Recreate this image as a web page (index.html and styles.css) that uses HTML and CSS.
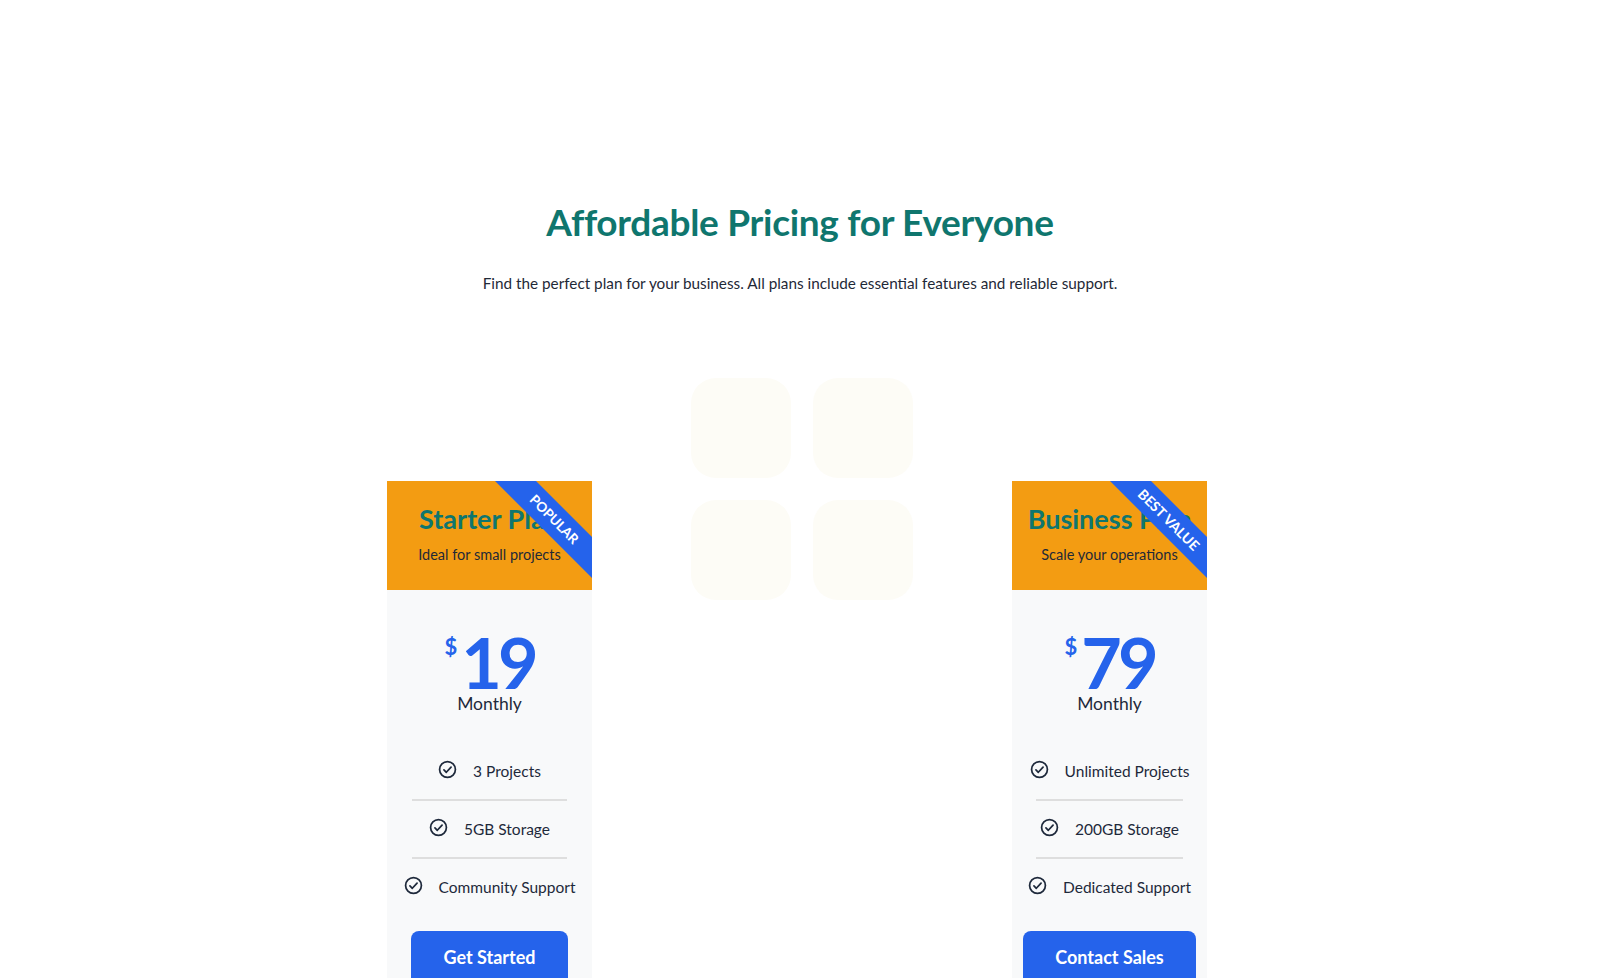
FILE: index.html
```html
<!DOCTYPE html>
<html lang="en">
<head>
<meta charset="utf-8">
<title>Pricing</title>
<link rel="stylesheet" href="styles.css">
</head>
<body>
<section class="pricing">
  <h1 class="pricing-title">Affordable Pricing for Everyone</h1>
  <p class="pricing-lead">Find the perfect plan for your business. All plans include essential features and reliable support.</p>

  <div class="plans">
    <article class="plan plan-starter">
      <header class="plan-head">
        <h2 class="plan-name">Starter Plan</h2>
        <p class="plan-tagline">Ideal for small projects</p>
        <span class="ribbon">Popular</span>
      </header>
      <div class="plan-body">
        <div class="price"><span class="currency">$</span><span class="amount">19</span></div>
        <div class="period">Monthly</div>
        <ul class="features">
          <li class="feature"><svg class="check" viewBox="0 0 24 24"><circle cx="12" cy="12" r="10"/><path d="M7.5 12.5l3 3 6-6.5"/></svg><span>3 Projects</span></li>
          <li class="feature"><svg class="check" viewBox="0 0 24 24"><circle cx="12" cy="12" r="10"/><path d="M7.5 12.5l3 3 6-6.5"/></svg><span>5GB Storage</span></li>
          <li class="feature"><svg class="check" viewBox="0 0 24 24"><circle cx="12" cy="12" r="10"/><path d="M7.5 12.5l3 3 6-6.5"/></svg><span>Community Support</span></li>
        </ul>
        <div class="plan-cta"><a class="btn" href="#">Get Started</a></div>
      </div>
    </article>

    <div class="plan-placeholder">
      <svg class="grid-icon" viewBox="0 0 222 222">
        <rect x="0" y="0" width="100" height="100" rx="25"/>
        <rect x="122" y="0" width="100" height="100" rx="25"/>
        <rect x="0" y="122" width="100" height="100" rx="25"/>
        <rect x="122" y="122" width="100" height="100" rx="25"/>
      </svg>
    </div>

    <article class="plan plan-business">
      <header class="plan-head">
        <h2 class="plan-name">Business Plan</h2>
        <p class="plan-tagline">Scale your operations</p>
        <span class="ribbon">Best Value</span>
      </header>
      <div class="plan-body">
        <div class="price"><span class="currency">$</span><span class="amount">79</span></div>
        <div class="period">Monthly</div>
        <ul class="features">
          <li class="feature"><svg class="check" viewBox="0 0 24 24"><circle cx="12" cy="12" r="10"/><path d="M7.5 12.5l3 3 6-6.5"/></svg><span>Unlimited Projects</span></li>
          <li class="feature"><svg class="check" viewBox="0 0 24 24"><circle cx="12" cy="12" r="10"/><path d="M7.5 12.5l3 3 6-6.5"/></svg><span>200GB Storage</span></li>
          <li class="feature"><svg class="check" viewBox="0 0 24 24"><circle cx="12" cy="12" r="10"/><path d="M7.5 12.5l3 3 6-6.5"/></svg><span>Dedicated Support</span></li>
        </ul>
        <div class="plan-cta"><a class="btn" href="#">Contact Sales</a></div>
      </div>
    </article>
  </div>
</section>
</body>
</html>
```

FILE: styles.css
```css
* { box-sizing: border-box; }

html, body {
  margin: 0;
  padding: 0;
  background: #ffffff;
  font-family: "Lato", "Noto Sans", sans-serif;
  color: #1e293b;
}

body { overflow: hidden; height: 978px; }

.pricing {
  padding-top: 198px;
  text-align: center;
}

.pricing-title {
  margin: 0;
  font-size: 37px;
  line-height: 48px;
  font-weight: 700;
  color: #0f766e;
  letter-spacing: -0.3px;
}

.pricing-lead {
  margin: 25px 0 0;
  font-size: 15.3px;
  line-height: 24px;
  color: #1f2937;
}

.plans {
  margin-top: 83px;
  display: grid;
  grid-template-columns: 205px 420px 195px;
  justify-content: center;
  align-items: start;
  transform: translateX(-3px);
}

.plan {
  margin-top: 103px;
  background: #f8f9fa;
}

.plan-head {
  position: relative;
  overflow: hidden;
  background: #f39c12;
  height: 109px;
  padding-top: 22px;
}

.plan-name {
  margin: 0;
  font-size: 27px;
  line-height: 32px;
  font-weight: 700;
  color: #0f766e;
  white-space: nowrap;
}

.plan-tagline {
  margin: 10px 0 0;
  font-size: 14.5px;
  line-height: 20px;
  color: #1f2937;
}

.ribbon {
  position: absolute;
  top: 24px;
  right: -42px;
  width: 160px;
  height: 29px;
  line-height: 29px;
  background: #2563eb;
  color: #ffffff;
  font-size: 13.5px;
  font-weight: 700;
  text-transform: uppercase;
  text-align: center;
  transform: rotate(45deg);
}

.plan-business .ribbon { font-size: 14px; }

.plan-body {
  padding: 39px 16px 0;
}

.price {
  display: flex;
  justify-content: center;
  align-items: flex-start;
  color: #2563eb;
  font-weight: 700;
}

.currency {
  font-size: 22px;
  line-height: 26px;
  margin-top: 5px;
  margin-right: 4px;
}

.amount {
  font-size: 70px;
  line-height: 66px;
  letter-spacing: -4px;
}

.period {
  margin-top: -3px;
  font-size: 17.5px;
  line-height: 24px;
  color: #1e293b;
}

.features {
  list-style: none;
  margin: 27px 0 0;
  padding: 0;
}

.feature {
  display: flex;
  justify-content: center;
  align-items: center;
  gap: 16px;
  padding: 16px 0;
  font-size: 15.5px;
  line-height: 24px;
  white-space: nowrap;
}

.feature + .feature {
  border-top: 2px solid #dedede;
  width: 90%;
  margin: 0 auto;
}

.feature:first-child { width: 90%; margin: 0 auto; }

.feature .check {
  width: 19px;
  height: 19px;
  flex: none;
  margin-top: -4px;
  fill: none;
  stroke: #1e293b;
  stroke-width: 2.2;
  stroke-linecap: round;
  stroke-linejoin: round;
}

.plan-cta {
  display: flex;
  justify-content: center;
  margin-top: 16px;
}

.btn {
  flex: none;
  display: block;
  padding: 14px 32px 24px;
  background: #2563eb;
  color: #ffffff;
  font-size: 18px;
  line-height: 24px;
  font-weight: 700;
  text-decoration: none;
  white-space: nowrap;
  border-radius: 8px;
}

.plan-placeholder {
  display: flex;
  justify-content: center;
}

.grid-icon {
  width: 222px;
  height: 222px;
  fill: #fdfcf6;
}
```
